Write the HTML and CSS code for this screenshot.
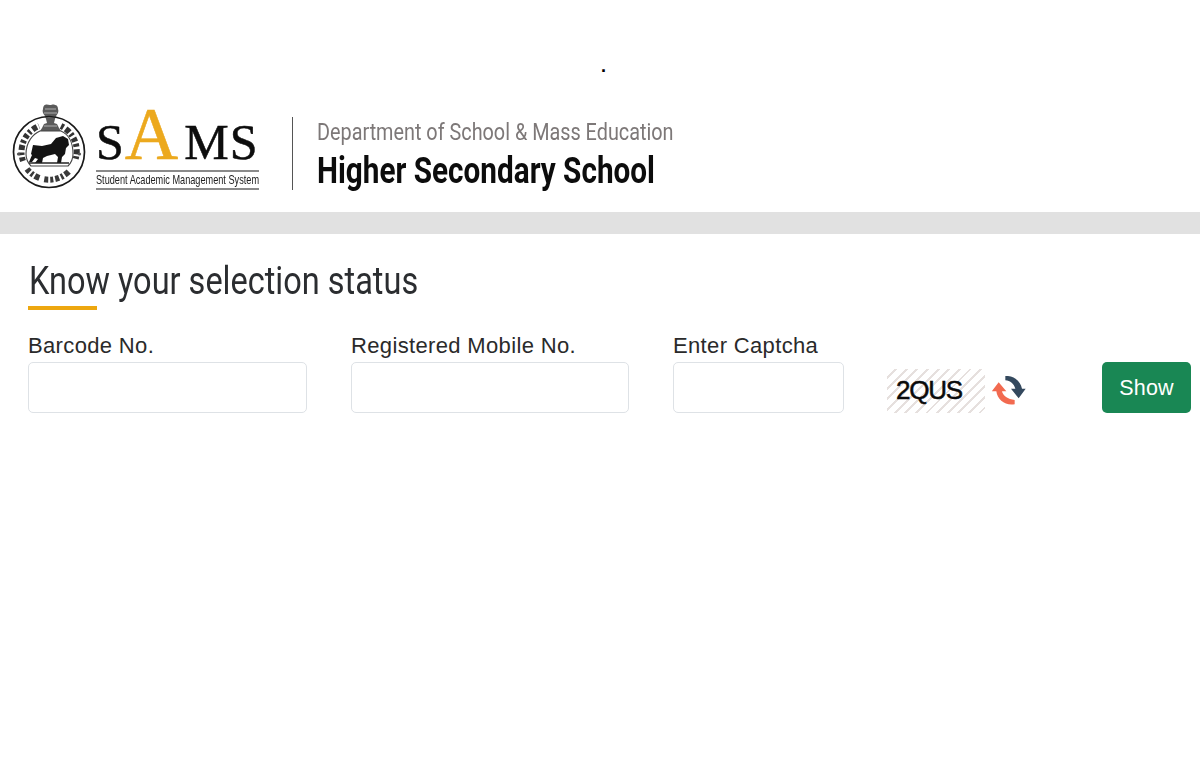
FILE: index.html
```html
<!DOCTYPE html>
<html lang="en">
<head>
<meta charset="utf-8">
<title>Know your selection status</title>
<link rel="stylesheet" href="styles.css">
</head>
<body>
<div class="topline"><span class="dot">.</span></div>
<header class="header">
  <svg class="emblem" viewBox="0 0 76 86" width="76" height="86" aria-hidden="true">
    <path d="M34 1c2-1 3 0 5 0 2 0 3-1 5 0 2 0 3 2 3 4 1 2 0 5-2 7l-1 3-1 4 3 1 2 4 2 3H29l2-3 2-4 3-1-1-4-1-3c-2-2-3-5-2-7 0-2 1-4 2-4z" fill="#5a5a5a"/>
    <path d="M34 5h11M33 9h13M35 13h9M33 22h13" stroke="#c4c4c4" stroke-width=".8"/>
    <circle cx="38" cy="48" r="35.5" fill="none" stroke="#1a1a1a" stroke-width="1.7"/>
    <path d="M12 57A28 28 0 0 1 28 22" fill="none" stroke="#333" stroke-width="6" stroke-dasharray="4 2.2 2.5 2.5 5 2 3 2.5"/>
    <path d="M50 22A28 28 0 0 1 64 57" fill="none" stroke="#333" stroke-width="6" stroke-dasharray="3 2.5 5 2 2.5 2.5 4 2.2"/>
    <path d="M16 65A28 28 0 0 0 60 65" fill="none" stroke="#3a3a3a" stroke-width="6" stroke-dasharray="4 2 2.5 2 5 5 4 2 3 2"/>
    <circle cx="7.5" cy="50" r="1.6" fill="#555"/>
    <circle cx="68.5" cy="50" r="1.6" fill="#555"/>
    <path d="M15 50C15 38 22 30 29 27h21c7 3 12 11 12 23 0 5-2 9-5 12H20c-3-3-5-7-5-12z" fill="none" stroke="#444" stroke-width="1.1"/>
    <path d="M20 50l2-9 9 1 9-2 5-6 7-2 5 3 1 6-3 3-1 6-3 3-1 6h-4l1-6-3-3-8 2-4 2-1 5h-7l3-4-3-1-3 4h-3l3-7z" fill="#141414"/>
    <path d="M18 59h40" stroke="#222" stroke-width="1.4"/>
  </svg>
  <div class="sams">
    <div class="sams-word"><span>S</span><span class="sams-a">A</span><span class="sams-m">M</span><span class="sams-s">S</span></div>
    <div class="sams-sub"><span>Student Academic Management System</span></div>
  </div>
  <div class="dept">
    <div class="dept-name">Department of School &amp; Mass Education</div>
    <div class="dept-school">Higher Secondary School</div>
  </div>
</header>
<div class="band"></div>
<main class="content">
  <h1 class="title">Know your selection status</h1>
  <div class="rule"></div>
  <form class="form">
    <div class="field field-first">
      <label class="label" for="barcode">Barcode No.</label>
      <input class="input" id="barcode" type="text">
    </div>
    <div class="field field-second">
      <label class="label" for="mobile">Registered Mobile No.</label>
      <input class="input" id="mobile" type="text">
    </div>
    <div class="field field-small">
      <label class="label" for="captcha">Enter Captcha</label>
      <input class="input" id="captcha" type="text">
    </div>
    <div class="captcha">
      <div class="captcha-img">2QUS</div>
      <svg class="refresh" viewBox="20 20 102 90" width="34" height="30" aria-hidden="true">
        <path d="M60 20C85 18 105 35 110 58h11L100 87 77 58h13C86 44 75 34 60 33z" fill="#34495e"/>
        <path d="M88 105C60 110 36 92 33 66H19L40 39l23 27H50c2 13 18 24 38 26z" fill="#f26a50"/>
      </svg>
    </div>
    <button class="btn" type="button">Show</button>
  </form>
</main>
</body>
</html>
```
FILE: styles.css
```css
* { box-sizing: border-box; }
html, body { margin: 0; background: #fff; }
body { width: 1200px; height: 768px; overflow: hidden; font-family: "Liberation Sans", Arial, sans-serif; color: #212529; }

.topline { height: 100px; text-align: center; padding-top: 56px; padding-left: 7px; font-size: 18px; line-height: 20px; color: #000; font-weight: 700; }

.header { height: 112px; display: flex; align-items: flex-start; padding-left: 11px; }
.emblem { margin-top: 4px; flex: none; filter: blur(.4px); }
.sams { width: 164px; margin-left: 9px; margin-top: 6px; flex: none; }
.sams-word { display: flex; align-items: baseline; height: 56px; font-family: "Liberation Serif", serif; font-size: 50px; line-height: 56px; color: #0d0d0d; -webkit-text-stroke: .5px #0d0d0d; white-space: nowrap; }
.sams-a { font-size: 74px; margin-left: 1px; color: #eca91e; -webkit-text-stroke: .5px #eca91e; }
.sams-m { margin-left: 6px; }
.sams-s { margin-left: 1px; }
.sams-sub { margin-top: 8px; width: 163px; height: 20px; border-top: 2px solid #8a8a8a; border-bottom: 2px solid #8a8a8a; font-size: 13px; line-height: 16px; color: #222; white-space: nowrap; }
.sams-sub span { display: inline-block; transform: scaleX(.705); transform-origin: left center; }

.dept { margin-left: 32px; margin-top: 17px; height: 73px; border-left: 1px solid #555; padding-left: 24px; flex: none; width: 400px; }
.dept-name { font-family: Roboto, sans-serif; font-size: 24px; line-height: 30px; color: #7d7878; white-space: nowrap; transform: scaleX(.826); transform-origin: left center; }
.dept-school { font-family: Roboto, sans-serif; font-weight: 700; font-size: 37px; line-height: 46px; margin-top: 1px; color: #0c0c0c; white-space: nowrap; transform: scaleX(.803); transform-origin: left center; }

.band { height: 22px; background: #e1e1e1; }

.content { padding: 0 9px 0 28px; }
.title { margin: 24px 0 0 1px; font-family: Roboto, sans-serif; font-weight: 400; font-size: 38px; line-height: 46px; color: #2b2d30; white-space: nowrap; transform: scaleX(.855); transform-origin: left center; }
.rule { width: 69px; height: 4px; margin-top: 2px; background: #eda70f; }

.form { display: flex; align-items: flex-end; margin-top: 23px; }
.field { flex: none; margin-right: 44px; }
.field-first { width: 279px; }
.field-second { width: 278px; }
.field-small { width: 171px; margin-right: 43px; }
.label { display: block; font-size: 22px; line-height: 26px; letter-spacing: .35px; color: #2a2a2a; margin-bottom: 3px; white-space: nowrap; }
.input { display: block; width: 100%; height: 51px; border: 1px solid #dee2e6; border-radius: 5px; background: #fff; }

.captcha { display: flex; align-items: center; width: 215px; flex: none; }
.captcha-img { width: 98px; height: 44px; font-size: 26px; line-height: 43px; color: #0a0a0a; padding-left: 9px; letter-spacing: -1.2px; -webkit-text-stroke: .5px #0a0a0a; background: repeating-linear-gradient(135deg, #fff 0 5.5px, #e6e0de 5.5px 7.5px); }
.refresh { margin-left: 7px; flex: none; }

.btn { width: 89px; height: 51px; flex: none; border: 0; border-radius: 5px; background: #198754; color: #fff; font-family: "Liberation Sans", sans-serif; font-size: 21.5px; letter-spacing: .2px; padding: 1px 0 0; }
```
